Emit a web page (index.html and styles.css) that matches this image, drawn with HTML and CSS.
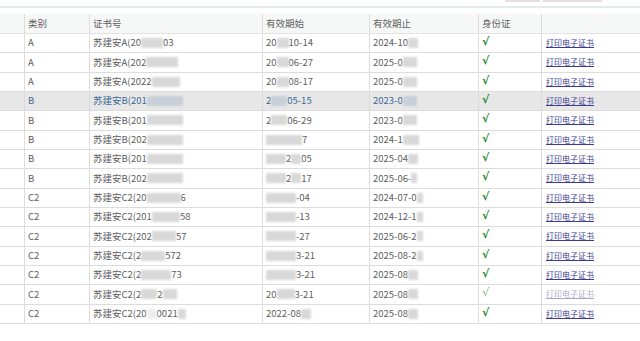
FILE: index.html
```html
<!DOCTYPE html>
<html lang="zh-CN">
<head>
<meta charset="utf-8">
<title>证书列表</title>
<link rel="stylesheet" href="styles.css">
</head>
<body>
<div class="topbar">
  <div class="btns"><span class="btn b1"></span><span class="btn b2"></span></div>
</div>
<div class="grid">
  <div class="row head">
    <div class="c"></div><div class="c">类别</div><div class="c">证书号</div><div class="c">有效期始</div><div class="c">有效期止</div><div class="c">身份证</div><div class="c"></div>
  </div>
  <div class="row">
    <div class="c"></div><div class="c">A</div>
    <div class="c">苏建安A(20<span class="m" style="width:22px"></span>03</div>
    <div class="c">20<span class="m" style="width:12px"></span>10-14</div>
    <div class="c">2024-10<span class="m" style="width:10px"></span></div>
    <div class="c"><span class="ok">√</span></div><div class="c"><a href="#">打印电子证书</a></div>
  </div>
  <div class="row">
    <div class="c"></div><div class="c">A</div>
    <div class="c">苏建安A(202<span class="m" style="width:32px"></span></div>
    <div class="c">20<span class="m" style="width:12px"></span>06-27</div>
    <div class="c">2025-0<span class="m" style="width:14px"></span></div>
    <div class="c"><span class="ok">√</span></div><div class="c"><a href="#">打印电子证书</a></div>
  </div>
  <div class="row">
    <div class="c"></div><div class="c">A</div>
    <div class="c">苏建安A(2022<span class="m" style="width:28px"></span></div>
    <div class="c">20<span class="m" style="width:12px"></span>08-17</div>
    <div class="c">2025-0<span class="m" style="width:14px"></span></div>
    <div class="c"><span class="ok">√</span></div><div class="c"><a href="#">打印电子证书</a></div>
  </div>
  <div class="row sel">
    <div class="c"></div><div class="c">B</div>
    <div class="c">苏建安B(201<span class="m" style="width:36px"></span></div>
    <div class="c">2<span class="m" style="width:16px"></span>05-15</div>
    <div class="c">2023-0<span class="m" style="width:14px"></span></div>
    <div class="c"><span class="ok">√</span></div><div class="c"><a href="#">打印电子证书</a></div>
  </div>
  <div class="row">
    <div class="c"></div><div class="c">B</div>
    <div class="c">苏建安B(201<span class="m" style="width:36px"></span></div>
    <div class="c">2<span class="m" style="width:16px"></span>06-29</div>
    <div class="c">2023-0<span class="m" style="width:14px"></span></div>
    <div class="c"><span class="ok">√</span></div><div class="c"><a href="#">打印电子证书</a></div>
  </div>
  <div class="row">
    <div class="c"></div><div class="c">B</div>
    <div class="c">苏建安B(202<span class="m" style="width:36px"></span></div>
    <div class="c"><span class="m" style="width:36px"></span>7</div>
    <div class="c">2024-1<span class="m" style="width:16px"></span></div>
    <div class="c"><span class="ok">√</span></div><div class="c"><a href="#">打印电子证书</a></div>
  </div>
  <div class="row">
    <div class="c"></div><div class="c">B</div>
    <div class="c">苏建安B(201<span class="m" style="width:36px"></span></div>
    <div class="c"><span class="m" style="width:20px"></span>2<span class="m" style="width:10px"></span>05</div>
    <div class="c">2025-04<span class="m" style="width:10px"></span></div>
    <div class="c"><span class="ok">√</span></div><div class="c"><a href="#">打印电子证书</a></div>
  </div>
  <div class="row">
    <div class="c"></div><div class="c">B</div>
    <div class="c">苏建安B(202<span class="m" style="width:36px"></span></div>
    <div class="c"><span class="m" style="width:20px"></span>2<span class="m" style="width:10px"></span>17</div>
    <div class="c">2025-06-<span class="m" style="width:6px"></span></div>
    <div class="c"><span class="ok">√</span></div><div class="c"><a href="#">打印电子证书</a></div>
  </div>
  <div class="row">
    <div class="c"></div><div class="c">C2</div>
    <div class="c">苏建安C2(20<span class="m" style="width:34px"></span>6</div>
    <div class="c"><span class="m" style="width:30px"></span>-04</div>
    <div class="c">2024-07-0<span class="m" style="width:6px"></span></div>
    <div class="c"><span class="ok">√</span></div><div class="c"><a href="#">打印电子证书</a></div>
  </div>
  <div class="row">
    <div class="c"></div><div class="c">C2</div>
    <div class="c">苏建安C2(201<span class="m" style="width:28px"></span>58</div>
    <div class="c"><span class="m" style="width:30px"></span>-13</div>
    <div class="c">2024-12-1<span class="m" style="width:6px"></span></div>
    <div class="c"><span class="ok">√</span></div><div class="c"><a href="#">打印电子证书</a></div>
  </div>
  <div class="row">
    <div class="c"></div><div class="c">C2</div>
    <div class="c">苏建安C2(202<span class="m" style="width:24px"></span>57</div>
    <div class="c"><span class="m" style="width:30px"></span>-27</div>
    <div class="c">2025-06-2<span class="m" style="width:6px"></span></div>
    <div class="c"><span class="ok">√</span></div><div class="c"><a href="#">打印电子证书</a></div>
  </div>
  <div class="row">
    <div class="c"></div><div class="c">C2</div>
    <div class="c">苏建安C2(2<span class="m" style="width:24px"></span>572</div>
    <div class="c"><span class="m" style="width:30px"></span>3-21</div>
    <div class="c">2025-08-2<span class="m" style="width:6px"></span></div>
    <div class="c"><span class="ok">√</span></div><div class="c"><a href="#">打印电子证书</a></div>
  </div>
  <div class="row">
    <div class="c"></div><div class="c">C2</div>
    <div class="c">苏建安C2(2<span class="m" style="width:30px"></span>73</div>
    <div class="c"><span class="m" style="width:30px"></span>3-21</div>
    <div class="c">2025-08<span class="m" style="width:10px"></span></div>
    <div class="c"><span class="ok">√</span></div><div class="c"><a href="#">打印电子证书</a></div>
  </div>
  <div class="row">
    <div class="c"></div><div class="c">C2</div>
    <div class="c">苏建安C2(2<span class="m" style="width:16px"></span>2<span class="m" style="width:14px"></span></div>
    <div class="c">20<span class="m" style="width:18px"></span>3-21</div>
    <div class="c">2025-08<span class="m" style="width:10px"></span></div>
    <div class="c"><span class="ok faint">√</span></div><div class="c"><a href="#" class="faint">打印电子证书</a></div>
  </div>
  <div class="row">
    <div class="c"></div><div class="c">C2</div>
    <div class="c">苏建安C2(20<span class="m light" style="width:10px"></span>0021<span class="m" style="width:8px"></span></div>
    <div class="c">2022-08<span class="m" style="width:10px"></span></div>
    <div class="c">2025-08<span class="m" style="width:10px"></span></div>
    <div class="c"><span class="ok">√</span></div><div class="c"><a href="#">打印电子证书</a></div>
  </div>
</div>
</body>
</html>
```
FILE: styles.css
```css
* { box-sizing: border-box; }
html, body { margin: 0; padding: 0; background: #fff; }
body {
  width: 640px;
  height: 341px;
  overflow: hidden;
  font-family: "Noto Sans CJK SC", "Noto Sans", sans-serif;
  font-size: 9.5px;
  color: #606060;
}
.topbar {
  height: 14px;
}
.btns {
  height: 6px;
  border-bottom: 2px solid #e3ece9;
  display: flex;
  padding-left: 505px;
  gap: 3px;
  box-sizing: content-box;
}
.btn {
  display: block;
  height: 2px;
  background: #e6dfe0;
}
.b1 { width: 35px; }
.b2 { width: 59px; }
.grid { width: 640px; }
.row {
  display: grid;
  grid-template-columns: 24px 65px 173px 107px 109px 63px 1fr;
  height: 19.33px;
  border-bottom: 1px solid #dcdcdc;
}
.row.head {
  height: 20px;
  background: #f6f7f7;
  border-bottom-color: #e2e2e2;
}
.c {
  display: flex;
  align-items: center;
  padding-left: 3px;
  white-space: nowrap;
  overflow: hidden;
  border-left: 1px solid #dcdcdc;
  line-height: 1;
}
.c:first-child { border-left: none; }
.c:nth-child(7) { padding-left: 4px; }
.row.sel { background: #e7e7e7; color: #3e6a96; }
.m {
  display: inline-block;
  height: 10px;
  background: #d8d8d8;
  filter: blur(1.2px);
}
.row.sel .m { background: #c9cfd8; }
.m.light { background: #eeeeee; }
.ok {
  color: #2a8a2a;
  font-family: "DejaVu Sans", sans-serif;
  font-weight: bold;
  font-size: 11px;
  margin-top: -3px;
}
a {
  color: #3b3b8f;
  text-decoration: underline;
  font-size: 8px;
}
.faint { opacity: 0.45; }
```
